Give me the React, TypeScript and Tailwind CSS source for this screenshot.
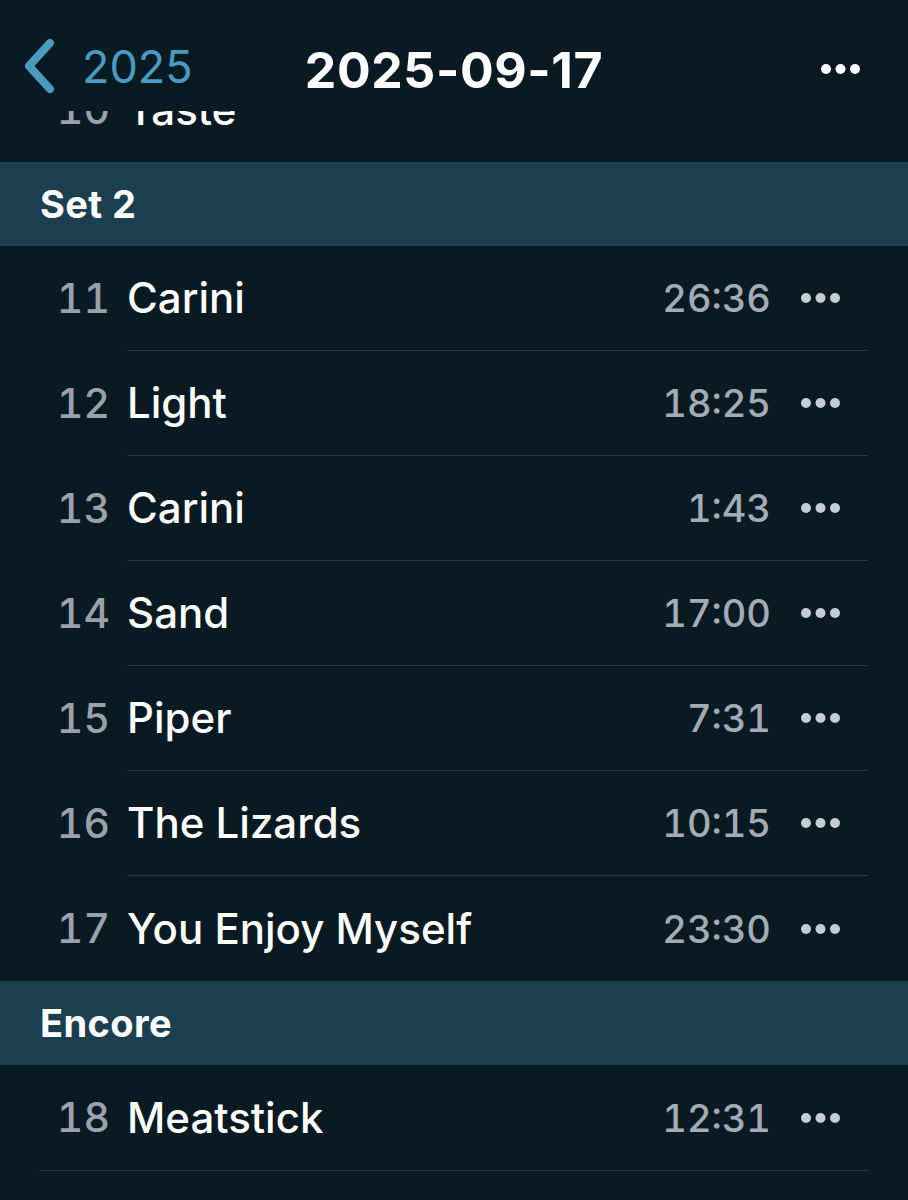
import React from 'react';

type Song = { n: number; title: string; time: string };

const set2: Song[] = [
  { n: 11, title: 'Carini', time: '26:36' },
  { n: 12, title: 'Light', time: '18:25' },
  { n: 13, title: 'Carini', time: '1:43' },
  { n: 14, title: 'Sand', time: '17:00' },
  { n: 15, title: 'Piper', time: '7:31' },
  { n: 16, title: 'The Lizards', time: '10:15' },
  { n: 17, title: 'You Enjoy Myself', time: '23:30' },
];

const encore: Song[] = [{ n: 18, title: 'Meatstick', time: '12:31' }];

function Dots({ className }: { className?: string }) {
  return (
    <svg width="40" height="10" viewBox="0 0 40 10" className={className} fill="currentColor">
      <circle cx="5" cy="5" r="5" />
      <circle cx="19.5" cy="5" r="5" />
      <circle cx="34" cy="5" r="5" />
    </svg>
  );
}

function Row({ song, divider }: { song: Song; divider: boolean }) {
  return (
    <div className="flex h-[105px] pl-[60px] pr-[40px]">
      <div className="flex w-[50px] items-center justify-end text-[41px] font-medium leading-none tabular-nums text-[#99a1ab]">
        {song.n}
      </div>
      <div
        className={`ml-[17px] flex flex-1 items-center pr-[27px] ${
          divider ? 'border-b border-[#1e3b49]' : ''
        }`}
      >
        <span className="flex-1 text-[42px] font-medium leading-none text-white">{song.title}</span>
        {song.time && (
          <>
            <span className="text-[38px] font-medium leading-none tabular-nums text-[#a3abb5]">
              {song.time}
            </span>
            <Dots className="ml-[30px] text-[#c5ccd4]" />
          </>
        )}
      </div>
    </div>
  );
}

function SectionHeader({ label }: { label: string }) {
  return (
    <div className="flex h-[84px] items-center bg-[#1c3f4f] px-[40px] text-[38px] font-bold leading-none tracking-[0.4px] text-white">
      {label}
    </div>
  );
}

export default function App() {
  return (
    <div className="h-[1200px] w-[908px] overflow-hidden bg-[#0a1a22] font-['Inter',sans-serif]">
      <header className="grid h-[111px] grid-cols-[1fr_auto_1fr] items-start bg-[#0a1a22] pt-[38px]">
        <div className="flex items-center pl-[22px]">
          <svg width="34" height="56" viewBox="0 0 34 56" className="text-[#4a9bc1]">
            <path
              d="M28 5 L7 28 L28 51"
              fill="none"
              stroke="currentColor"
              strokeWidth="8"
              strokeLinecap="round"
              strokeLinejoin="round"
            />
          </svg>
          <span className="ml-[26px] text-[45px] leading-none text-[#4a9bc1]">2025</span>
        </div>
        <div className="pt-[7px] text-[50px] font-bold leading-none tracking-[0.6px] text-white">
          2025-09-17
        </div>
        <div className="flex justify-end pr-[47px] pt-[26px]">
          <Dots className="text-white" />
        </div>
      </header>

      {/* list scrolled under the nav bar: only the bottom of row 10 shows */}
      <div className="h-[51px] overflow-hidden">
        <div className="-mt-[54px]">
          <Row song={{ n: 10, title: 'Taste', time: '' }} divider={false} />
        </div>
      </div>
      <SectionHeader label="Set 2" />
      {set2.map((s, i) => (
        <Row key={s.n} song={s} divider={i < set2.length - 1} />
      ))}
      <SectionHeader label="Encore" />
      {encore.map((s) => (
        <Row key={s.n} song={s} divider={false} />
      ))}
      <div className="mx-[39px] border-b border-[#1e3b49]" />
    </div>
  );
}
